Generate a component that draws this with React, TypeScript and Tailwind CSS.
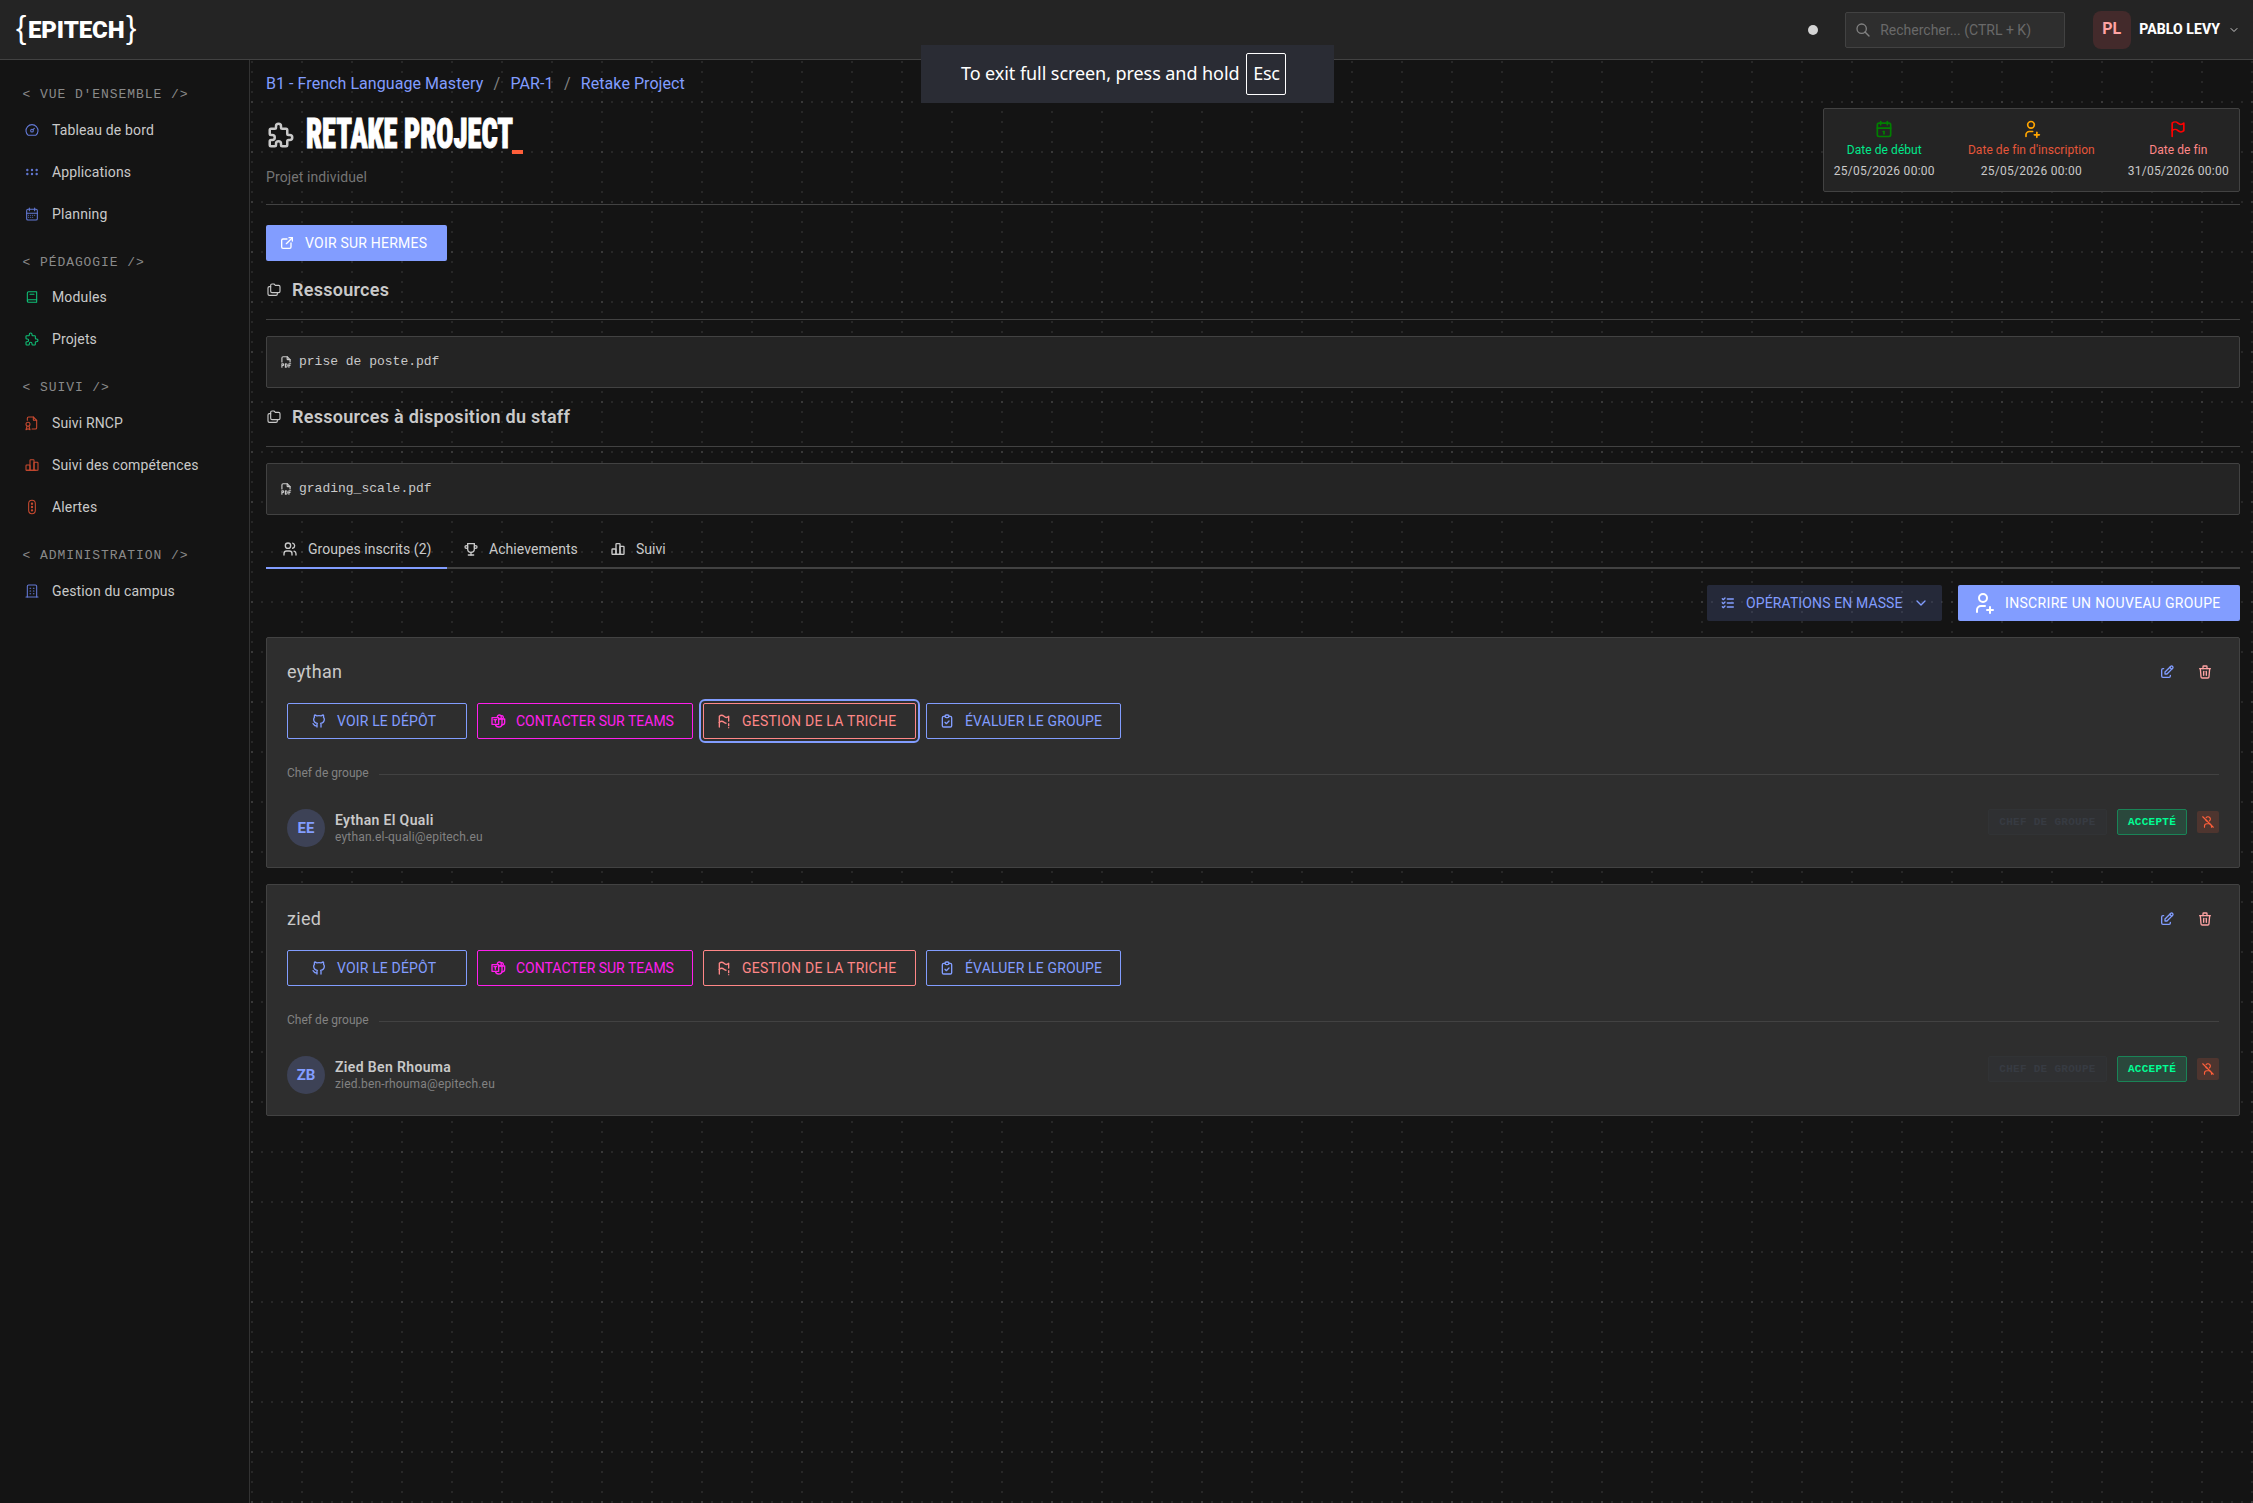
import React from "react";
import {
  TbBook2, TbBrandGithub, TbBrandTeams, TbBuilding, TbCalendar, TbCalendarMonth, TbChartBar, TbChevronDown,
  TbClipboardCheck, TbDashboard, TbEdit, TbExternalLink, TbFileCertificate, TbFileTypePdf, TbFlag,
  TbFlagExclamation, TbFolders, TbGripHorizontal, TbListCheck, TbPuzzle, TbSearch, TbTrafficLights, TbTrash,
  TbTrophy, TbUserOff, TbUserPlus, TbUsers,
} from "react-icons/tb";

const nav = [
  {
    title: "VUE D'ENSEMBLE",
    color: "text-[#6379d6]",
    items: [
      { label: "Tableau de bord", icon: TbDashboard },
      { label: "Applications", icon: TbGripHorizontal },
      { label: "Planning", icon: TbCalendarMonth },
    ],
  },
  {
    title: "PÉDAGOGIE",
    color: "text-[#0fc077]",
    items: [
      { label: "Modules", icon: TbBook2 },
      { label: "Projets", icon: TbPuzzle },
    ],
  },
  {
    title: "SUIVI",
    color: "text-[#c94a30]",
    items: [
      { label: "Suivi RNCP", icon: TbFileCertificate },
      { label: "Suivi des compétences", icon: TbChartBar },
      { label: "Alertes", icon: TbTrafficLights },
    ],
  },
  {
    title: "ADMINISTRATION",
    color: "text-[#6379d6]",
    items: [{ label: "Gestion du campus", icon: TbBuilding }],
  },
];

const groups = [
  { name: "eythan", initials: "EE", student: "Eythan El Quali", email: "eythan.el-quali@epitech.eu", focused: true },
  { name: "zied", initials: "ZB", student: "Zied Ben Rhouma", email: "zied.ben-rhouma@epitech.eu", focused: false },
];

function Header() {
  return (
    <header className="flex h-[60px] items-center border-b border-[#424242] bg-[#242424] pl-4 pr-[13px]">
      {/* Logo */}
      <div className="flex h-10 items-center font-['Liberation_Sans',sans-serif] text-[31px] leading-10 text-white">
        <span className="w-3 pb-1">{"{"}</span>
        <span className="w-[98px] font-['Roboto',sans-serif] text-2xl leading-10 font-black tracking-[-0.1px]">EPITECH</span>
        <span className="w-3 pb-1">{"}"}</span>
      </div>

      <div className="ml-auto flex items-center">
        <span className="size-2.5 rounded-full bg-[#d4d4d4]" />
        <div className="ml-[27px] flex h-9 w-[220px] items-center rounded-xs border border-[#424242] bg-[#2e2e2e] pl-[9px] text-[#696969]">
          <TbSearch size={16} className="text-[#828282]" />
          <span className="ml-[9px] text-sm">Rechercher... (CTRL + K)</span>
        </div>
        <div className="ml-7 flex size-[38px] items-center justify-center rounded-lg bg-[#432a2b] pb-0.5 pr-px text-base font-bold text-[#ffa3a3]">PL</div>
        <span className="ml-2 pb-0.5 text-sm font-extrabold tracking-[0.08px] text-white">PABLO LEVY</span>
        <TbChevronDown size={12} className="ml-2 text-[#c9c9c9]" />
      </div>
    </header>
  );
}

function Sidebar() {
  return (
    <nav className="w-[250px] shrink-0 border-r border-[#333] pt-2">
      {nav.map((section) => (
        <div key={section.title}>
          <div className="flex h-[41.8px] items-center pl-[22.5px] pt-3 font-['Liberation_Mono',monospace] text-[13px] tracking-[0.93px] text-[#8a8a8a]">
            {`< ${section.title} />`}
          </div>
          {section.items.map((item) => (
            <a key={item.label} className="flex h-[41.9px] items-center gap-3 pb-[1.5px] pl-6 text-sm font-[450] tracking-[0.14px]">
              <item.icon size={16} strokeWidth={1.6} className={section.color} />
              {item.label}
            </a>
          ))}
        </div>
      ))}
    </nav>
  );
}

function Resource({ title, file }: { title: string; file: string }) {
  return (
    <section>
      <h2 className="mt-[17px] flex h-6 items-center gap-2.5 text-lg font-semibold tracking-[0.27px]">
        <TbFolders size={16} strokeWidth={1.7} />
        {title}
      </h2>
      <hr className="mt-[17px] border-[#424242]" />
      <div className="mt-4 flex h-[52px] items-center gap-1.5 rounded-xs border border-[#424242] bg-[#242424] pl-3">
        <TbFileTypePdf size={14} />
        <span className="font-['Liberation_Mono',monospace] text-[13px]">{file}</span>
      </div>
    </section>
  );
}

function DateInfo({ icon: Icon, iconColor, label, labelColor, value }: any) {
  return (
    <div className="flex flex-col items-center text-xs">
      <Icon size={20} className={iconColor} />
      <span className={`mt-0.5 leading-[18px] tracking-[0.06px] ${labelColor}`}>{label}</span>
      <span className="mt-[3px] leading-[18px] tracking-[0.28px]">{value}</span>
    </div>
  );
}

function GroupCard({ group }: { group: (typeof groups)[number] }) {
  const btn = "flex h-9 items-center gap-2.5 rounded-xs border text-sm font-[450] tracking-[0.16px] whitespace-nowrap";
  return (
    <div className="h-[231.5px] rounded-xs border border-[#424242] bg-[#2e2e2e] px-5 pt-5">
      <div className="flex h-7 items-center">
        <h3 className="text-lg font-[450] tracking-[0.3px]">{group.name}</h3>
        <div className="ml-auto flex gap-2.5">
          <button className="flex size-7 items-center justify-center text-[#829dff]"><TbEdit size={16} /></button>
          <button className="flex size-7 items-center justify-center text-[#ffa3a3]"><TbTrash size={16} /></button>
        </div>
      </div>

      <div className="mt-[17px] flex gap-2.5">
        <button className={`${btn} w-[180px] border-[#829dff] pl-[23px] text-[#829dff]`}>
          <TbBrandGithub size={16} />
          VOIR LE DÉPÔT
        </button>
        <button className={`${btn} w-[216px] border-[#ff1fec] pl-3 text-[#ff1fec]`}>
          <TbBrandTeams size={16} />
          <span className="tracking-normal">CONTACTER SUR TEAMS</span>
        </button>
        <button className={`${btn} w-[213px] border-[#ff8787] pl-3 text-[#ff8787] ${group.focused ? "outline-2 outline-offset-2 outline-[#829dff]" : ""}`}>
          <TbFlagExclamation size={16} />
          <span className="tracking-[0.24px]">GESTION DE LA TRICHE</span>
        </button>
        <button className={`${btn} w-[195px] border-[#829dff] pl-3 text-[#829dff]`}>
          <TbClipboardCheck size={16} />
          ÉVALUER LE GROUPE
        </button>
      </div>

      <div className="mt-[25px] flex h-[18px] items-center gap-2.5 text-xs text-[#828282]">
        <span className="tracking-[0.03px]">Chef de groupe</span>
        <span className="mt-[3px] h-px flex-1 bg-[#424242]" />
      </div>

      <div className="mt-[27px] flex items-start">
        <div className="flex size-[38px] items-center justify-center rounded-full bg-[#3d4256] text-[15px] font-bold text-[#829dff]">
          {group.initials}
        </div>
        <div className="ml-2.5 pt-0.5">
          <div className="text-sm leading-[18px] font-semibold tracking-[0.36px]">{group.student}</div>
          <div className="text-xs leading-4 tracking-[0.17px] text-[#828282]">{group.email}</div>
        </div>
        <div className="ml-auto flex items-center gap-2.5 font-['Liberation_Mono',monospace] text-[11px] font-bold">
          <span className="flex h-[26px] w-[119px] items-center justify-center rounded-xs border border-[#313335] bg-[#2f3032] tracking-[0.28px] text-[#373b42]">
            CHEF DE GROUPE
          </span>
          <span className="flex h-[26px] w-[70px] items-center justify-center rounded-xs border border-[#1a8457] bg-[#2a483c] tracking-[0.28px] text-[#00ff94]">
            ACCEPTÉ
          </span>
          <span className="flex size-[22px] items-center justify-center rounded-xs bg-[#4e352f] text-[#ff5f3a]">
            <TbUserOff size={14} />
          </span>
        </div>
      </div>
    </div>
  );
}

export default function App() {
  return (
    <div className="flex h-[1503px] flex-col overflow-hidden bg-[#141414] font-['Roboto',sans-serif] text-[#c9c9c9]">
      <Header />
      <div className="flex flex-1">
        <Sidebar />
        <main className="flex-1 bg-[radial-gradient(circle_at_2px_2px,#ffffff15_1.5px,transparent_1.5px),radial-gradient(circle_at_2px_2px,#ffffff15_1.5px,transparent_1.5px)] bg-[size:50px_10px,10px_50px] bg-[position:0_0,0_40px] pl-4 pr-[13px] pt-3">
          {/* Breadcrumb */}
          <div className="flex h-6 items-center gap-[10.3px] tracking-[0.06px] text-[#829dff]">
            <a>B1 - French Language Mastery</a>
            <span className="text-[#828282]">/</span>
            <a>PAR-1</a>
            <span className="text-[#828282]">/</span>
            <a>Retake Project</a>
          </div>

          {/* Title and dates */}
          <div className="mt-3 flex h-[84px] items-start">
            <div>
              <div className="flex h-[50px] items-center">
                <TbPuzzle size={30} className="mt-1" />
                <h1 className="ml-2.5 w-[206px] pt-0.5 text-[42px] leading-[50px] font-black whitespace-nowrap text-white [font-stretch:75%] [-webkit-text-stroke:1px_#fff]">
                  <span className="inline-block origin-left scale-x-[0.677]">RETAKE PROJECT</span>
                </h1>
                <span className="mt-[38px] h-1 w-[11px] bg-[#ff5f3a]" />
              </div>
              <p className="mt-[9px] text-sm leading-5 tracking-[0.1px] text-[#757575]">Projet individuel</p>
            </div>
            <div className="ml-auto flex h-[84px] gap-[33px] rounded-xs border border-[#424242] bg-[#242424] px-2.5 pt-2.5">
              <DateInfo icon={TbCalendar} iconColor="text-[#008000]" label="Date de début" labelColor="text-[#00e88a]" value="25/05/2026 00:00" />
              <DateInfo icon={TbUserPlus} iconColor="text-[#ffa500]" label="Date de fin d'inscription" labelColor="text-[#e5563a]" value="25/05/2026 00:00" />
              <DateInfo icon={TbFlag} iconColor="text-[#ff0000]" label="Date de fin" labelColor="text-[#ff8787]" value="31/05/2026 00:00" />
            </div>
          </div>
          <hr className="mt-3 border-[#424242]" />

          <button className="mt-5 flex h-9 w-[181px] items-center gap-2.5 rounded-xs bg-[#829dff] pl-[13px] text-sm font-[450] tracking-[0.22px] text-white">
            <TbExternalLink size={16} />
            VOIR SUR HERMES
          </button>

          <Resource title="Ressources" file="prise de poste.pdf" />
          <Resource title="Ressources à disposition du staff" file="grading_scale.pdf" />

          {/* Tabs */}
          <div className="mt-4 flex h-[38px] border-b-2 border-[#424242] text-sm tracking-[0.05px]">
            <button className="-mb-0.5 flex w-[181px] items-center gap-2.5 border-b-2 border-[#829dff] pl-4">
              <TbUsers size={16} />
              Groupes inscrits (2)
            </button>
            <button className="flex items-center gap-2.5 px-4">
              <TbTrophy size={16} />
              Achievements
            </button>
            <button className="flex items-center gap-2.5 px-4">
              <TbChartBar size={16} />
              Suivi
            </button>
          </div>

          <div className="mt-4 flex justify-end gap-4 text-sm font-[450]">
            <button className="flex h-9 w-[235px] items-center gap-2.5 rounded-xs bg-[#829dff29] pl-[13px] text-[#829dff]">
              <TbListCheck size={16} />
              <span className="tracking-[0.12px]">OPÉRATIONS EN MASSE</span>
              <TbChevronDown size={16} />
            </button>
            <button className="flex h-9 w-[282px] items-center gap-2.5 rounded-xs bg-[#829dff] pl-[13px] text-white">
              <TbUserPlus size={24} />
              <span className="tracking-[0.33px]">INSCRIRE UN NOUVEAU GROUPE</span>
            </button>
          </div>

          <div className="mt-[15.8px] flex flex-col gap-4">
            {groups.map((g) => (
              <GroupCard key={g.name} group={g} />
            ))}
          </div>
        </main>
      </div>

      {/* Full screen notice */}
      <div className="absolute left-[921px] top-[45px] flex h-[58px] w-[413px] items-center bg-[#2a2c34] pl-10 font-['Noto_Sans',sans-serif] text-lg text-white">
        <span className="pb-0.5 tracking-[-0.07px]">To exit full screen, press and hold</span>
        <span className="ml-[7px] flex h-[42px] w-10 items-center justify-center rounded-xs border border-white pb-0.5 tracking-[-0.3px]">Esc</span>
      </div>
    </div>
  );
}
